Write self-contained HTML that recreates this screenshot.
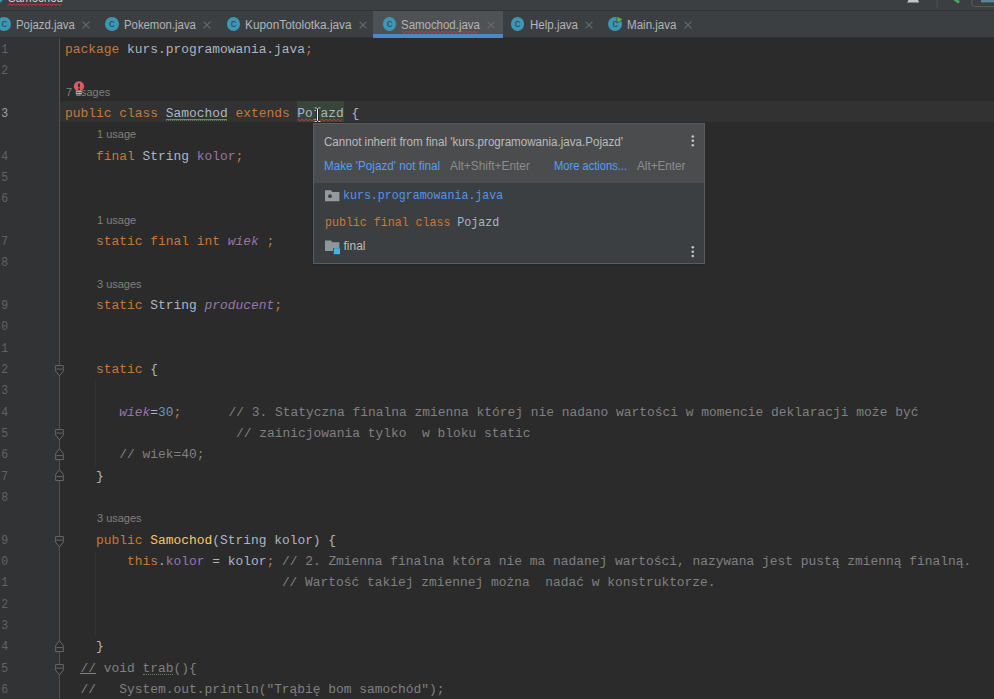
<!DOCTYPE html>
<html><head><meta charset="utf-8"><style>
html,body{margin:0;padding:0;}
body{width:994px;height:699px;overflow:hidden;background:#2b2b2b;position:relative;font-family:"Liberation Sans",sans-serif;}
.abs{position:absolute;}
#top{position:absolute;left:0;top:0;width:994px;height:10px;background:#3c3f41;overflow:hidden;}
#top .t{position:absolute;left:7.6px;top:-9.0px;font-size:12.5px;color:#d2d2d2;line-height:14px;transform-origin:0 0;transform:scaleX(0.92);}
#topline{position:absolute;left:0;top:10px;width:994px;height:1px;background:#313335;}
#tabs{position:absolute;left:0;top:11px;width:994px;height:27px;background:#3c3f41;overflow:hidden;}
#tabs .act{position:absolute;top:0;height:27px;background:#4e5254;border-bottom:4px solid #4a88c7;box-sizing:border-box;}
#tabs .ic{position:absolute;top:6.2px;width:13.8px;height:13.8px;border-radius:50%;background:#3e96b3;color:#27475c;font-size:11px;line-height:12.6px;text-align:center;}
#tabs .tx{position:absolute;top:0.6px;height:27px;line-height:27px;font-size:12px;color:#b4b4b4;white-space:nowrap;transform-origin:0 0;}
#tabs .x{position:absolute;top:9.6px;}
#gutter{position:absolute;left:0;top:38px;width:59px;height:661px;background:#313335;}
#gline{position:absolute;left:59px;top:38px;width:1px;height:661px;background:#505050;}
#cur{position:absolute;left:60px;top:101px;width:934px;height:21.3px;background:#323232;}
.ln{position:absolute;left:-0.5px;width:8px;transform-origin:100% 50%;transform:scaleX(0.88);direction:rtl;font-family:"Liberation Mono",monospace;font-size:13px;color:#606366;height:21.33px;line-height:21.33px;overflow:hidden;white-space:pre;}
.lnc{color:#a4a3a3;}
.cl{position:absolute;left:65px;font-family:"Liberation Mono",monospace;font-size:12.925px;color:#a9b7c6;height:21.33px;line-height:21.33px;white-space:pre;}
.k{color:#cc7832;}
.c{color:#808080;}
.f{color:#9876aa;}
.fi{color:#9876aa;font-style:italic;}
.n{color:#6897bb;}
.m{color:#ffc66d;}
.hint{position:absolute;font-family:"Liberation Sans",sans-serif;font-size:11.5px;color:#808080;height:21.33px;line-height:21.33px;white-space:pre;transform-origin:0 0;}
#pop{position:absolute;left:313px;top:123px;width:392px;height:141px;background:#3c3f41;border:1px solid #5a5c5e;box-sizing:border-box;box-shadow:0 1px 2px rgba(0,0,0,0.15);}
#pop .hd{position:absolute;left:0;top:0;width:390px;height:59px;background:#4b4c4e;}
#pop .s{position:absolute;font-size:12px;white-space:pre;line-height:16px;transform-origin:0 0;}
#pop .mono{font-family:"Liberation Mono",monospace;font-size:12.2px;transform:scaleX(0.9525);}
</style></head><body>
<div id="top"><div class="abs" style="left:-10px;top:-10.6px;width:13.8px;height:13.8px;border-radius:50%;background:#3e96b3"></div><div class="t">Samochod</div>
<svg class="abs" style="left:0;top:0" width="994" height="10"><polyline points="7.8,5.3 9.8,4.0 11.8,5.3 13.8,4.0 15.8,5.3 17.8,4.0 19.8,5.3 21.8,4.0 23.8,5.3 25.8,4.0 27.8,5.3 29.8,4.0 31.8,5.3 33.8,4.0 35.8,5.3 37.8,4.0 39.8,5.3 41.8,4.0 43.8,5.3 45.8,4.0 47.8,5.3 49.8,4.0 51.8,5.3 53.8,4.0 55.8,5.3 57.8,4.0 59.8,5.3 61.8,4.0" fill="none" stroke="#bc3f3c" stroke-width="1"/>
<path d="M908.5 0H918L919.2 2.5H907.2Z" fill="#c4c4c4"/>
<rect x="936.6" y="0" width="1" height="8" fill="#505355"/>
<path d="M953.5 0L958 3.6L960 1.6L958.2 0Z" fill="#4fa753"/>
<path d="M971.9 0V4Q971.9 6.6 974.5 6.6H994" fill="none" stroke="#5a5d5f" stroke-width="1"/>
<rect x="981" y="0" width="13" height="2.4" fill="#5d8397"/>
</svg></div><div id="topline"></div>
<div id="tabs">
<div class="abs" style="left:0;top:26px;width:994px;height:1px;background:#2f3031"></div>
<div class="ic" style="left:-2.7px"><span>c</span></div>
<div class="tx" style="left:16.3px;transform:scaleX(0.9492)">Pojazd.java</div>
<svg class="x" style="left:82.4px" width="8" height="8" viewBox="0 0 8 8"><path d="M0.6 0.6L7.4 7.4M7.4 0.6L0.6 7.4" stroke="#696c6e" stroke-width="1.1" fill="none"/></svg>
<div class="ic" style="left:104.8px"><span>c</span></div>
<div class="tx" style="left:124.2px;transform:scaleX(0.9454)">Pokemon.java</div>
<svg class="x" style="left:203.0px" width="8" height="8" viewBox="0 0 8 8"><path d="M0.6 0.6L7.4 7.4M7.4 0.6L0.6 7.4" stroke="#696c6e" stroke-width="1.1" fill="none"/></svg>
<div class="ic" style="left:226.6px"><span>c</span></div>
<div class="tx" style="left:245.4px;transform:scaleX(0.9863)">KuponTotolotka.java</div>
<svg class="x" style="left:359.4px" width="8" height="8" viewBox="0 0 8 8"><path d="M0.6 0.6L7.4 7.4M7.4 0.6L0.6 7.4" stroke="#696c6e" stroke-width="1.1" fill="none"/></svg>
<div class="act" style="left:373px;width:130px"></div>
<div class="ic" style="left:382.7px"><span>c</span></div>
<div class="tx" style="left:401.4px;transform:scaleX(0.9538)">Samochod.java</div>
<svg class="x" style="left:487.0px" width="8" height="8" viewBox="0 0 8 8"><path d="M0.6 0.6L7.4 7.4M7.4 0.6L0.6 7.4" stroke="#696c6e" stroke-width="1.1" fill="none"/></svg>
<svg class="abs" style="left:0;top:0" width="994" height="27"><polyline points="402.2,20.2 404.2,21.8 406.2,20.2 408.2,21.8 410.2,20.2 412.2,21.8 414.2,20.2 416.2,21.8 418.2,20.2 420.2,21.8 422.2,20.2 424.2,21.8 426.2,20.2 428.2,21.8 430.2,20.2 432.2,21.8 434.2,20.2 436.2,21.8 438.2,20.2 440.2,21.8 442.2,20.2 444.2,21.8 446.2,20.2 448.2,21.8 450.2,20.2 452.2,21.8 454.2,20.2 456.2,21.8 458.2,20.2 460.2,21.8 462.2,20.2 464.2,21.8 466.2,20.2 468.2,21.8 470.2,20.2 472.2,21.8 474.2,20.2 476.2,21.8 478.2,20.2" fill="none" stroke="#bc3f3c" stroke-width="1"/></svg>
<div class="ic" style="left:510.7px"><span>c</span></div>
<div class="tx" style="left:529.6px;transform:scaleX(0.9594)">Help.java</div>
<svg class="x" style="left:584.9px" width="8" height="8" viewBox="0 0 8 8"><path d="M0.6 0.6L7.4 7.4M7.4 0.6L0.6 7.4" stroke="#696c6e" stroke-width="1.1" fill="none"/></svg>
<div class="ic" style="left:608.4px"><span>c</span></div>
<svg class="abs" style="left:616.3px;top:4.6px" width="8" height="8" viewBox="0 0 8 8"><path d="M1 0.3L7 3.5L1 7Z" fill="#62b54a" stroke="#3c3f41" stroke-width="0.7"/></svg>
<div class="tx" style="left:627.0px;transform:scaleX(0.9638)">Main.java</div>
<svg class="x" style="left:684.1px" width="8" height="8" viewBox="0 0 8 8"><path d="M0.6 0.6L7.4 7.4M7.4 0.6L0.6 7.4" stroke="#696c6e" stroke-width="1.1" fill="none"/></svg>
</div>
<div id="gutter"></div><div id="cur"></div><div id="gline"></div>
<div class="abs" style="left:297.4px;top:101px;width:47.1px;height:21.4px;background:#384539"></div>
<div id="code">
<div class="ln" style="top:39.03px">1</div>
<div class="cl" style="top:39.03px"><span class="k">package</span> kurs.programowania.java<span class="k">;</span></div>
<div class="ln" style="top:60.37px">2</div>
<div class="hint" style="top:81.50px;left:65.8px;transform:scaleX(0.945)">7 usages</div>
<div class="ln lnc" style="top:103.03px">3</div>
<div class="cl" style="top:103.03px"><span class="k">public class</span> Samochod <span class="k">extends</span> Pojazd {</div>
<div class="hint" style="top:124.17px;left:96.6px;transform:scaleX(0.957)">1 usage</div>
<div class="ln" style="top:145.70px">4</div>
<div class="cl" style="top:145.70px">    <span class="k">final</span> String <span class="f">kolor</span><span class="k">;</span></div>
<div class="ln" style="top:167.03px">5</div>
<div class="ln" style="top:188.36px">6</div>
<div class="hint" style="top:209.50px;left:96.6px;transform:scaleX(0.957)">1 usage</div>
<div class="ln" style="top:231.03px">7</div>
<div class="cl" style="top:231.03px">    <span class="k">static final int</span> <span class="fi">wiek</span> <span class="k">;</span></div>
<div class="ln" style="top:252.36px">8</div>
<div class="hint" style="top:273.50px;left:96.6px;transform:scaleX(0.955)">3 usages</div>
<div class="ln" style="top:295.03px">9</div>
<div class="cl" style="top:295.03px">    <span class="k">static</span> String <span class="fi">producent</span><span class="k">;</span></div>
<div class="ln" style="top:316.36px">0</div>
<div class="ln" style="top:337.70px">1</div>
<div class="ln" style="top:359.03px">2</div>
<div class="cl" style="top:359.03px">    <span class="k">static</span> {</div>
<div class="ln" style="top:380.36px">3</div>
<div class="ln" style="top:401.69px">4</div>
<div class="cl" style="top:401.69px">       <span class="fi">wiek</span>=<span class="n">30</span><span class="k">;</span>      <span class="c" style="margin-left:0.7px;letter-spacing:0.008px">// 3. Statyczna finalna zmienna której nie nadano wartości w momencie deklaracji może być</span></div>
<div class="ln" style="top:423.03px">5</div>
<div class="cl" style="top:423.03px">                      <span class="c" style="margin-left:0.7px">// zainicjowania tylko  w bloku static</span></div>
<div class="ln" style="top:444.36px">6</div>
<div class="cl" style="top:444.36px">       <span class="c">// wiek=40;</span></div>
<div class="ln" style="top:465.69px">7</div>
<div class="cl" style="top:465.69px">    }</div>
<div class="ln" style="top:487.03px">8</div>
<div class="hint" style="top:508.16px;left:96.6px;transform:scaleX(0.955)">3 usages</div>
<div class="ln" style="top:529.69px">9</div>
<div class="cl" style="top:529.69px">    <span class="k">public</span> <span class="m">Samochod</span>(String kolor) {</div>
<div class="ln" style="top:551.03px">0</div>
<div class="cl" style="top:551.03px">        <span class="k">this</span>.<span class="f">kolor</span> = kolor<span class="k">;</span> <span class="c">// 2. Zmienna finalna która nie ma nadanej wartości, nazywana jest pustą zmienną finalną.</span></div>
<div class="ln" style="top:572.36px">1</div>
<div class="cl" style="top:572.36px">                            <span class="c">// Wartość takiej zmiennej można  nadać w konstruktorze.</span></div>
<div class="ln" style="top:593.69px">2</div>
<div class="ln" style="top:615.02px">3</div>
<div class="ln" style="top:636.36px">4</div>
<div class="cl" style="top:636.36px">    }</div>
<div class="ln" style="top:657.69px">5</div>
<div class="cl" style="top:657.69px">  <span class="c">// void trab(){</span></div>
<div class="ln" style="top:679.02px">6</div>
<div class="cl" style="top:679.02px">  <span class="c">//   System.out.println("Trąbię bom samochód");</span></div>
</div>
<div class="abs" style="left:166.3px;top:118.9px;width:61.0px;height:1px;background:#748078"></div>
<div class="abs" style="left:166.3px;top:120.0px;width:61.0px;height:0;border-top:1px dotted #4f8048"></div>
<svg class="abs" style="left:0;top:0" width="994" height="699"><polyline points="298.1,119.3 300.1,120.8 302.1,119.3 304.1,120.8 306.1,119.3 308.1,120.8 310.1,119.3 312.1,120.8 314.1,119.3 316.1,120.8 318.1,119.3 320.1,120.8 322.1,119.3 324.1,120.8 326.1,119.3 328.1,120.8 330.1,119.3 332.1,120.8 334.1,119.3 336.1,120.8 338.1,119.3 340.1,120.8 342.1,119.3" fill="none" stroke="#bc3f3c" stroke-width="0.9"/></svg>
<div class="abs" style="left:80.2px;top:673.3px;width:15.5px;height:1px;background:#7f827a"></div>
<div class="abs" style="left:142.6px;top:673.5px;width:30.0px;height:0;border-top:1px dotted #5c8a52"></div>
<div class="abs" style="left:95.0px;top:379.9px;width:1px;height:86.3px;background:#333333"></div>
<div class="abs" style="left:95.0px;top:550.5px;width:1px;height:86.3px;background:#333333"></div>
<svg class="abs" style="left:55px;top:365.3px" width="10" height="13" viewBox="0 0 10 13"><path d="M0.7 0.6H8.3V6.2L4.5 10.8L0.7 6.2Z" fill="#2b2b2b" stroke="#6a6a6a" stroke-width="1"/><path d="M1.6 4.1H7.4" stroke="#6a6a6a" stroke-width="1"/></svg>
<svg class="abs" style="left:55px;top:429.3px" width="10" height="13" viewBox="0 0 10 13"><path d="M0.7 0.6H8.3V6.2L4.5 10.8L0.7 6.2Z" fill="#2b2b2b" stroke="#6a6a6a" stroke-width="1"/><path d="M1.6 4.1H7.4" stroke="#6a6a6a" stroke-width="1"/></svg>
<svg class="abs" style="left:55px;top:536.0px" width="10" height="13" viewBox="0 0 10 13"><path d="M0.7 0.6H8.3V6.2L4.5 10.8L0.7 6.2Z" fill="#2b2b2b" stroke="#6a6a6a" stroke-width="1"/><path d="M1.6 4.1H7.4" stroke="#6a6a6a" stroke-width="1"/></svg>
<svg class="abs" style="left:55px;top:664.0px" width="10" height="13" viewBox="0 0 10 13"><path d="M0.7 0.6H8.3V6.2L4.5 10.8L0.7 6.2Z" fill="#2b2b2b" stroke="#6a6a6a" stroke-width="1"/><path d="M1.6 4.1H7.4" stroke="#6a6a6a" stroke-width="1"/></svg>
<svg class="abs" style="left:55px;top:447.6px" width="10" height="13" viewBox="0 0 10 13"><path d="M0.7 11.6H8.3V5.4L4.5 0.8L0.7 5.4Z" fill="#2b2b2b" stroke="#6a6a6a" stroke-width="1"/><path d="M1.6 7.6H7.4" stroke="#6a6a6a" stroke-width="1"/></svg>
<svg class="abs" style="left:55px;top:469.0px" width="10" height="13" viewBox="0 0 10 13"><path d="M0.7 11.6H8.3V5.4L4.5 0.8L0.7 5.4Z" fill="#2b2b2b" stroke="#6a6a6a" stroke-width="1"/><path d="M1.6 7.6H7.4" stroke="#6a6a6a" stroke-width="1"/></svg>
<svg class="abs" style="left:55px;top:639.6px" width="10" height="13" viewBox="0 0 10 13"><path d="M0.7 11.6H8.3V5.4L4.5 0.8L0.7 5.4Z" fill="#2b2b2b" stroke="#6a6a6a" stroke-width="1"/><path d="M1.6 7.6H7.4" stroke="#6a6a6a" stroke-width="1"/></svg>
<svg class="abs" style="left:73px;top:80.7px" width="13" height="16" viewBox="0 0 13 16"><rect x="3" y="9.8" width="6" height="1.2" fill="#a8aaac"/><rect x="3" y="11.8" width="6" height="1.3" fill="#b4b6b8"/><rect x="4.2" y="13.6" width="3.6" height="0.9" fill="#8a8c8e"/><ellipse cx="6" cy="5.2" rx="5.1" ry="4.9" fill="#dc5a64"/><rect x="5" y="2.5" width="2" height="3.8" fill="#26382a"/><rect x="5" y="7.4" width="2" height="1.5" fill="#26382a"/></svg>
<svg class="abs" style="left:313px;top:107px" width="9" height="16" viewBox="0 0 9 16"><path d="M1.5 1H3.6L4.5 1.8L5.4 1H7.5M4.5 1.8V13.4M1.5 14.4H3.6L4.5 13.4L5.4 14.4H7.5" fill="none" stroke="#1a1a1a" stroke-width="2.4"/><path d="M1.5 1H3.6L4.5 1.8L5.4 1H7.5M4.5 1.8V13.4M1.5 14.4H3.6L4.5 13.4L5.4 14.4H7.5" fill="none" stroke="#f0f0f0" stroke-width="1"/></svg>
<div id="pop">
<div class="hd"></div>
<div class="s" style="left:10px;top:9.8px;color:#bbbbbb;transform:scaleX(0.966)">Cannot inherit from final 'kurs.programowania.java.Pojazd'</div>
<div class="s" style="left:10px;top:33.6px;color:#589df6;transform:scaleX(0.974)">Make 'Pojazd' not final</div>
<div class="s" style="left:136.4px;top:33.6px;color:#8c8c8c;transform:scaleX(0.99)">Alt+Shift+Enter</div>
<div class="s" style="left:239.5px;top:33.6px;color:#589df6;transform:scaleX(0.928)">More actions...</div>
<div class="s" style="left:322.7px;top:33.6px;color:#8c8c8c;transform:scaleX(0.976)">Alt+Enter</div>
<svg class="abs" style="left:11px;top:66px" width="15" height="12" viewBox="0 0 15 12"><path d="M0 0.2H6L7.4 2H14.4V11.2H0Z" fill="#939aa0"/><circle cx="5" cy="6.2" r="1.9" fill="#3c3f41"/></svg>
<div class="s mono" style="left:29.3px;top:63.9px;color:#5394ec">kurs.programowania.java</div>
<div class="s mono" style="left:10.5px;top:91px;color:#a9b7c6"><span class="k">public final class</span> Pojazd</div>
<svg class="abs" style="left:11px;top:116px" width="16" height="15" viewBox="0 0 16 15"><path d="M0 0.4H6L7.4 2.2H14.4V8H8V11H0Z" fill="#8f969c"/><rect x="8.8" y="8.2" width="6.2" height="6" fill="#40b6e0"/></svg>
<div class="s" style="left:29.5px;top:114px;color:#bbbbbb">final</div>
<svg class="abs" style="left:376px;top:9.8px" width="6" height="14" viewBox="0 0 6 14"><circle cx="2.8" cy="2.5" r="1.3" fill="#c4c4c4"/><circle cx="2.8" cy="6.8" r="1.3" fill="#c4c4c4"/><circle cx="2.8" cy="11.2" r="1.3" fill="#c4c4c4"/></svg>
<svg class="abs" style="left:376px;top:120.6px" width="6" height="14" viewBox="0 0 6 14"><circle cx="2.8" cy="2.3" r="1.3" fill="#c4c4c4"/><circle cx="2.8" cy="6.7" r="1.3" fill="#c4c4c4"/><circle cx="2.8" cy="11" r="1.3" fill="#c4c4c4"/></svg>
</div>
</body></html>
